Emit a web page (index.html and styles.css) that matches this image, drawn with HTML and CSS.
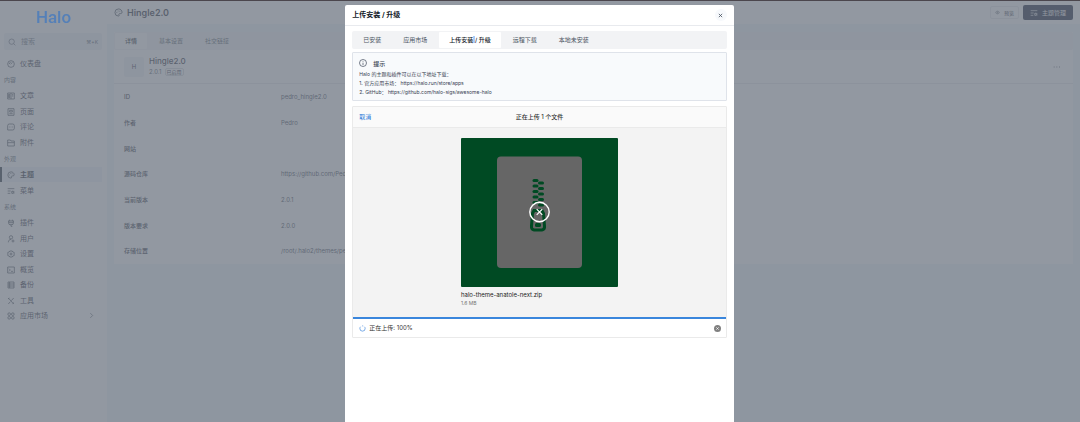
FILE: index.html
```html
<!DOCTYPE html>
<html lang="zh-CN">
<head>
<meta charset="utf-8">
<title>Halo - 主题</title>
<link rel="stylesheet" href="styles.css">
</head>
<body>
<svg class="sprite" aria-hidden="true">
  <symbol id="palette" viewBox="0 0 24 24"><path d="M12 2.500a9.500 9.500 0 1 0 0 19c1.800 0 2-1.500 1.300-2.600-1.200-2 .2-4 2.400-4H18c2 0 3.500-1.500 3.500-3.500 0-5-4.300-8.900-9.500-8.900z"/><path d="M7.500 11v2M11 7v2M15.500 7.500v2"/></symbol>
  <symbol id="listset" viewBox="0 0 24 24"><path d="M2 5h20M2 12h9M2 19h8"/><circle cx="17.500" cy="16" r="3"/><path d="M17.500 11v2M17.500 19v2M13 13.500l2 1M20 17.500l2 1M13 18.500l2-1M20 14.500l2-1"/></symbol>
</svg>
<div class="app">
  <aside class="sidebar">
    <a class="logo" href="#">Halo</a>
    <label class="search">
      <svg class="icon" viewBox="0 0 24 24"><circle cx="11" cy="11" r="8"/><path d="M17 17l5 5"/></svg>
      <input type="text" placeholder="搜索" aria-label="搜索">
      <span class="keys">⌘+K</span>
    </label>
    <nav class="menu">
      <ul>
        <li><a href="#"><svg class="icon" viewBox="0 0 24 24"><circle cx="12" cy="12" r="10"/><path d="M11 13l5-6M7 12a5 5 0 0 1 4-5"/></svg>仪表盘</a></li>
      </ul>
      <h2>内容</h2>
      <ul>
        <li><a href="#"><svg class="icon" viewBox="0 0 24 24"><path d="M2 3h20v18H2zM12 3v18M15 8h4M15 12h4M5 7h3v10H5z"/></svg>文章</a></li>
        <li><a href="#"><svg class="icon" viewBox="0 0 24 24"><path d="M3 2h18v20H3zM8 7h8v5H8zM7 17h10"/></svg>页面</a></li>
        <li><a href="#"><svg class="icon" viewBox="0 0 24 24"><path d="M7 3h10a5 5 0 0 1 5 5v8a5 5 0 0 1-5 5H2V8a5 5 0 0 1 5-5zM7 12h2M11 12h2M15 12h2"/></svg>评论</a></li>
        <li><a href="#"><svg class="icon" viewBox="0 0 24 24"><path d="M2 3h8l2 3h10v15H2zM2 11h20"/></svg>附件</a></li>
      </ul>
      <h2>外观</h2>
      <ul>
        <li class="current"><a href="#"><svg class="icon"><use href="#palette"/></svg>主题</a></li>
        <li><a href="#"><svg class="icon"><use href="#listset"/></svg>菜单</a></li>
      </ul>
      <h2>系统</h2>
      <ul>
        <li><a href="#"><svg class="icon" viewBox="0 0 24 24"><path d="M8 2v4M16 2v4M3 6h18M5 6v7a4 4 0 0 0 4 4h6a4 4 0 0 0 4-4V6M5 11h14M12 17v5h4"/></svg>插件</a></li>
        <li><a href="#"><svg class="icon" viewBox="0 0 24 24"><circle cx="12" cy="7" r="5"/><path d="M4 22c0-5 3-9 8-9"/><circle cx="18" cy="18" r="3"/></svg>用户</a></li>
        <li><a href="#"><svg class="icon" viewBox="0 0 24 24"><path d="M8.500 3h7l2 3 4 1v10l-4 1-2 3h-7l-2-3-4-1V7l4-1z"/><circle cx="12" cy="12" r="3"/></svg>设置</a></li>
        <li><a href="#"><svg class="icon" viewBox="0 0 24 24"><path d="M2 3h20v18H2zM6 8l4 4-4 4M12 16h6"/></svg>概览</a></li>
        <li><a href="#"><svg class="icon" viewBox="0 0 24 24"><path d="M3 3h18v18H3zM3 9h18M3 15h18M8 3v18"/></svg>备份</a></li>
        <li><a href="#"><svg class="icon" viewBox="0 0 24 24"><path d="M4 3l16 18M20 3l-7 8M10 14l-6 7M3 6l4-3M17 20l4-3"/></svg>工具</a></li>
        <li><a href="#"><svg class="icon" viewBox="0 0 24 24"><circle cx="6.500" cy="6.500" r="4"/><circle cx="17.500" cy="6.500" r="4"/><circle cx="6.500" cy="17.500" r="4"/><circle cx="17.500" cy="17.500" r="4"/></svg>应用市场<svg class="icon arrow" viewBox="0 0 24 24"><path d="M8 4l8 8-8 8"/></svg></a></li>
      </ul>
    </nav>
  </aside>

  <main class="main">
    <header class="topbar">
      <svg class="icon icon-title"><use href="#palette"/></svg>
      <h1>Hingle2.0</h1>
      <button class="btn" type="button"><svg class="icon" viewBox="0 0 24 24"><path d="M2 12c5-9 15-9 20 0-5 9-15 9-20 0z"/><circle cx="12" cy="12" r="3"/></svg>预览</button>
      <button class="btn btn-dark" type="button"><svg class="icon"><use href="#listset"/></svg>主题管理</button>
    </header>
    <section class="card">
      <div class="tabs page-tabs">
        <button type="button" class="active">详情</button>
        <button type="button">基本设置</button>
        <button type="button">社交链接</button>
      </div>
      <div class="theme">
        <span class="avatar">H</span>
        <div class="theme-text">
          <h3>Hingle2.0</h3>
          <p>2.0.1 <span class="tag">已启用</span></p>
        </div>
        <button class="more" type="button" aria-label="更多"><svg class="icon" viewBox="0 0 24 24"><path d="M2 12h3M10 12h3M18 12h3"/></svg></button>
      </div>
      <table class="info">
        <tr><th>ID</th><td>pedro_hingle2.0</td></tr>
        <tr><th>作者</th><td>Pedro</td></tr>
        <tr><th>网站</th><td></td></tr>
        <tr><th>源码仓库</th><td>https://github.com/Pedro</td></tr>
        <tr><th>当前版本</th><td>2.0.1</td></tr>
        <tr><th>版本要求</th><td>2.0.0</td></tr>
        <tr><th>存储位置</th><td>/root/.halo2/themes/pedro_hingle2.0</td></tr>
      </table>
    </section>
  </main>
</div>

<div class="backdrop">
  <div class="modal" role="dialog" aria-labelledby="modal-title">
    <header class="modal-head">
      <h2 id="modal-title">上传安装 / 升级</h2>
      <button class="close" type="button" aria-label="关闭"><svg class="icon" viewBox="0 0 24 24"><path d="M4 4l16 16M20 4L4 20"/></svg></button>
    </header>
    <div class="modal-body">
      <div class="tabs">
        <button type="button">已安装</button>
        <button type="button">应用市场</button>
        <button type="button" class="active">上传安装<span class="caret"> </span>/ 升级</button>
        <button type="button">远程下载</button>
        <button type="button">本地未安装</button>
      </div>
      <div class="alert">
        <h3><svg class="icon" viewBox="0 0 24 24"><circle cx="12" cy="12" r="10.500"/><path d="M12 11v7M12 6v2"/></svg>提示</h3>
        <p>Halo 的主题和插件可以在以下地址下载：</p>
        <p>1. 官方应用市场： https://halo.run/store/apps</p>
        <p>2. GitHub： https://github.com/halo-sigs/awesome-halo</p>
      </div>
      <div class="uploader">
        <div class="upload-head">
          <button type="button" class="cancel">取消</button>
          <span class="upload-title">正在上传 1 个文件</span>
        </div>
        <div class="upload-list">
          <figure class="file">
            <svg class="preview" viewBox="0 0 157 149">
              <rect width="157" height="149" rx="1" fill="#004a23"/>
              <rect x="36" y="18.500" width="85" height="111.500" rx="4" fill="#666"/>
              <g fill="#004a23">
                <rect x="71.500" y="41" width="6" height="3" rx="1.500"/><rect x="77" y="43.500" width="6" height="3" rx="1.500"/>
                <rect x="71.500" y="46.500" width="6" height="3" rx="1.500"/><rect x="77" y="49" width="6" height="3" rx="1.500"/>
                <rect x="71.500" y="52" width="6" height="3" rx="1.500"/><rect x="77" y="54.500" width="6" height="3" rx="1.500"/>
                <rect x="71.500" y="57.500" width="6" height="3" rx="1.500"/><rect x="77" y="60" width="6" height="3" rx="1.500"/>
                <rect x="71.500" y="63" width="6" height="3" rx="1.500"/><rect x="77" y="65.500" width="6" height="3" rx="1.500"/>
                <rect x="74" y="85" width="6" height="4" rx="1.500"/>
              </g>
              <path d="M73 72.500h8l1.500 3 1 12.500c.500 5-4 4-6.500 4s-7 1-6.500-4l1-12.500z" fill="none" stroke="#004a23" stroke-width="3"/>
              <circle cx="78.500" cy="74" r="9.700" fill="none" stroke="#fff" stroke-width="1.400"/>
              <path d="M75.700 71.200l5.600 5.600M81.300 71.200l-5.600 5.600" stroke="#fff" stroke-width="1.200"/>
            </svg>
            <figcaption>halo-theme-anatole-next.zip<small>1.6 MB</small></figcaption>
          </figure>
        </div>
        <div class="status">
          <svg class="icon spinner" viewBox="0 0 24 24"><circle cx="12" cy="12" r="9"/></svg>
          <span>正在上传: 100%</span>
          <button type="button" class="stop" aria-label="取消上传"><svg viewBox="0 0 24 24"><circle cx="12" cy="12" r="12" fill="#808080"/><path d="M8 8l8 8M16 8l-8 8" stroke="#fff" stroke-width="2.500"/></svg></button>
        </div>
      </div>
    </div>
  </div>
</div>
</body>
</html>
```

FILE: styles.css
```css
* { box-sizing: border-box; margin: 0; padding: 0; }
body {
  font-family: Inter, "Noto Sans CJK SC", sans-serif;
  font-size: 6px;
  line-height: 8px;
  color: #1f2937;
  min-height: 100vh;
  overflow: hidden;
}
button, input { font: inherit; color: inherit; border: 0; background: none; }
ul { list-style: none; }
a { color: inherit; text-decoration: none; }
.sprite { position: absolute; width: 0; height: 0; }
.icon {
  width: 8px;
  height: 8px;
  flex: none;
  fill: none;
  stroke: currentColor;
  stroke-width: 2;
}

.app { display: flex; min-height: 100vh; background: #eff6f9; }

.sidebar { width: 107px; flex: none; background: #fff; padding-top: 6px; }
.logo {
  display: block;
  position: relative;
  z-index: 2;
  text-align: center;
  font: 500 17px/22px Roboto, sans-serif;
  color: #5580b8;
}
.search {
  display: flex;
  align-items: center;
  height: 17px;
  margin: 5px 5px 6px 4px;
  padding: 0 4px;
  gap: 5px;
  border-radius: 2px;
  background: #f0f2f6;
  color: #6b7280;
}
.search input { flex: 1; min-width: 0; font-size: 7px; }
.search input::placeholder { color: #6b7280; }
.search .icon, .keys { color: #4b5563; }
.keys { font-size: 5px; }
.menu li a {
  display: flex;
  align-items: center;
  gap: 5px;
  height: 15px;
  margin-right: 5px;
  padding: 0 7px;
  font-size: 7px;
}
.menu li:nth-child(even) { margin-top: 1px; }
.menu h2 {
  padding: 5px 4px 4px;
  font-size: 6px;
  font-weight: 400;
  line-height: 8px;
  color: #4b5563;
}
.menu .current a {
  background: #f0f4f9;
  border-left: 2px solid #1f2937;
  padding-left: 5px;
  font-weight: 700;
}
.menu .arrow { margin-left: auto; width: 7px; height: 7px; }

.main { flex: 1; min-width: 0; }
.topbar {
  display: flex;
  align-items: center;
  gap: 4px;
  height: 24px;
  padding: 1px 7px 0;
  background: #fff;
}
.topbar h1 { flex: 1; font-size: 9px; line-height: 12px; font-weight: 600; }
.icon-title { width: 9px; height: 9px; }
.btn {
  display: flex;
  align-items: center;
  gap: 4px;
  height: 13px;
  padding: 0 4px;
  border: 1px solid #e5e7eb;
  border-radius: 2px;
  font-size: 5px;
}
.btn .icon { width: 5px; height: 5px; }
.btn-dark {
  height: 15px;
  padding: 0 7px;
  border: 0;
  background: #0e1731;
  color: #fff;
  font-size: 6px;
}
.btn-dark .icon { width: 8px; height: 8px; }

.card { margin: 8px 7px; background: #fff; }
.tabs {
  display: flex;
  gap: 2px;
  height: 18px;
  padding: 1px;
  border-radius: 2px;
  background: #f2f3f5;
  color: #4b5563;
}
.tabs button { padding: 0 10px; border-radius: 1px; }
.tabs .active { background: #fff; color: #111827; font-weight: 500; }
.caret { background: #a9cdfb; }
.theme {
  display: flex;
  align-items: center;
  gap: 5px;
  height: 34px;
  padding: 0 12px 0 10px;
  border-bottom: 1px solid #e5e7eb;
}
.avatar {
  width: 20px;
  height: 20px;
  border-radius: 2px;
  background: #eff1f5;
  text-align: center;
  line-height: 20px;
}
.theme-text { flex: 1; }
.theme h3 { font-size: 8px; line-height: 11px; font-weight: 500; }
.theme p { display: flex; gap: 3px; align-items: center; line-height: 10px; color: #4b5563; }
.tag {
  padding: 0 1px;
  border: 1px solid #d1d5db;
  border-radius: 2px;
  font-size: 5px;
  line-height: 6px;
  color: #1f2937;
}
.more { height: 8px; }
.info { width: 100%; border-collapse: collapse; table-layout: fixed; }
.info tr { height: 26px; }
.info tr:nth-child(3n) { height: 25px; }
.info th { width: 167px; padding-left: 10px; text-align: left; font-weight: 500; }
.info td { color: #374151; white-space: nowrap; }

.backdrop {
  position: fixed;
  inset: 0;
  display: flex;
  justify-content: center;
  padding: 4px 1px 0 0;
  border-top: 1px solid #4b464d;
  background: rgba(110, 118, 130, 0.75);
}
.modal {
  width: 36%;
  background: #fff;
  border-radius: 2px 2px 0 0;
}
.modal-head {
  display: flex;
  align-items: center;
  justify-content: space-between;
  height: 21px;
  padding: 0 7px;
  border-bottom: 1px solid #e8eaee;
}
.modal-head h2 { font-size: 7px; font-weight: 700; color: #111827; }
.close {
  display: flex;
  align-items: center;
  justify-content: center;
  width: 12px;
  height: 12px;
  border-radius: 50%;
  background: #f7f9fc;
  color: #4b5563;
}
.close .icon { width: 5px; height: 5px; stroke-width: 4; }
.modal-body { padding: 5px 7px; }
.alert {
  margin: 3px 0 5px;
  padding: 3px 6px;
  border: 1px solid #dfe3ea;
  border-radius: 1px;
  background: #f8fafc;
  font-size: 5px;
  line-height: 9px;
  color: #374151;
}
.alert h3 {
  display: flex;
  align-items: center;
  gap: 6px;
  height: 14px;
  font-size: 6px;
  font-weight: 500;
}
.uploader { border: 1px solid #eaeaea; border-radius: 1px; }
.upload-head {
  display: grid;
  grid-template-columns: 1fr auto 1fr;
  align-items: center;
  height: 21px;
  padding: 0 6px;
  border-bottom: 1px solid #eaeaea;
  background: #fafafa;
}
.cancel { justify-self: start; color: #2275d7; }
.upload-title { color: #333; font-weight: 500; }
.upload-list {
  display: flex;
  justify-content: center;
  padding: 10px 0;
  border-bottom: 2px solid #3a86dc;
  background: #f3f3f3;
}
.file { width: 157px; }
.preview { display: block; width: 100%; }
.file figcaption { padding-top: 3px; color: #222; line-height: 9px; }
.file small { display: block; font-size: 5px; line-height: 8px; color: #757575; }
.status {
  display: flex;
  align-items: center;
  gap: 3px;
  height: 18px;
  padding: 0 5px 0 6px;
  color: #333;
}
.status span { flex: 1; }
.spinner { width: 7px; height: 7px; color: #2275d7; stroke-dasharray: 34 6 4 5; }
.stop { display: flex; width: 7px; height: 7px; }
.stop svg { width: 100%; height: 100%; }
```
